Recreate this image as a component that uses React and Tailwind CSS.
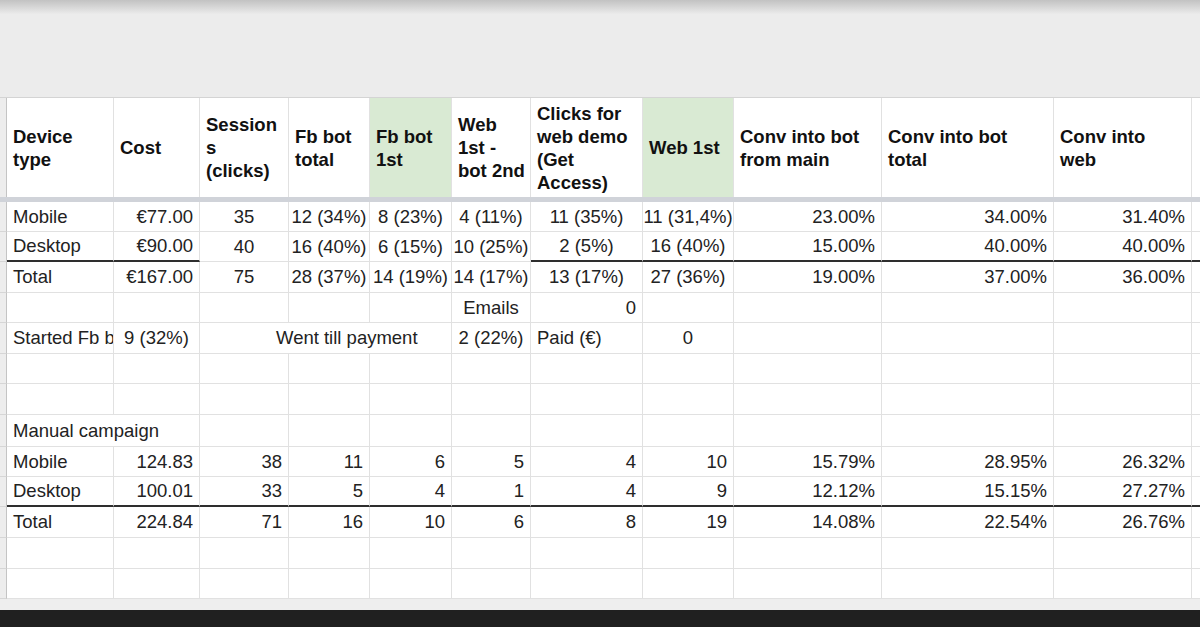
import React from 'react';

const GRID =
  'grid grid-cols-[7px_107px_86px_89px_81px_82px_79px_112px_91px_148px_172px_138px_8px]';

const ALIGN = {
  l: 'justify-start pl-[6px]',
  c: 'justify-center',
  r: 'justify-end pr-[6px]',
};

const HEIGHT = { 30: 'h-[30px]', 31: 'h-[31px]', 32: 'h-[32px]' };

const SPAN = { 1: '', 2: 'col-span-2', 3: 'col-span-3' };

const c = (t, a = 'l', extra = {}) => ({ t, a, ...extra });
const e = () => ({ t: '', a: 'l' });

const header = [
  { lines: ['Device', 'type'] },
  { lines: ['Cost'] },
  { lines: ['Session', 's', '(clicks)'] },
  { lines: ['Fb bot', 'total'] },
  { lines: ['Fb bot', '1st'], green: true },
  { lines: ['Web', '1st -', 'bot 2nd'] },
  { lines: ['Clicks for', 'web demo', '(Get', 'Access)'] },
  { lines: ['Web 1st'], green: true },
  { lines: ['Conv into bot', 'from main'] },
  { lines: ['Conv into bot', 'total'] },
  { lines: ['Conv into', 'web'] },
];

// under: column indexes (0 = A) whose bottom edge is the dark total rule
const rows = [
  {
    h: 30,
    cells: [c('Mobile'), c('€77.00', 'r'), c('35', 'c'), c('12 (34%)', 'c'), c('8 (23%)', 'c'), c('4 (11%)', 'c'), c('11 (35%)', 'c'), c('11 (31,4%)', 'c'), c('23.00%', 'r'), c('34.00%', 'r'), c('31.40%', 'r')],
  },
  {
    h: 30,
    under: [0, 1, 6, 7, 8, 9, 10, 11],
    cells: [c('Desktop'), c('€90.00', 'r'), c('40', 'c'), c('16 (40%)', 'c'), c('6 (15%)', 'c'), c('10 (25%)', 'c'), c('2 (5%)', 'c'), c('16 (40%)', 'c'), c('15.00%', 'r'), c('40.00%', 'r'), c('40.00%', 'r')],
  },
  {
    h: 31,
    cells: [c('Total'), c('€167.00', 'r'), c('75', 'c'), c('28 (37%)', 'c'), c('14 (19%)', 'c'), c('14 (17%)', 'c'), c('13 (17%)', 'c'), c('27 (36%)', 'c'), c('19.00%', 'r'), c('37.00%', 'r'), c('36.00%', 'r')],
  },
  {
    h: 30,
    cells: [e(), e(), e(), e(), e(), c('Emails', 'c'), c('0', 'r'), e(), e(), e(), e()],
  },
  {
    h: 31,
    cells: [c('Started Fb bot'), c('9 (32%)', 'c'), c('Went till payment', 'p', { span: 3 }), c('2 (22%)', 'c'), c('Paid (€)'), c('0', 'c'), e(), e(), e()],
  },
  { h: 30, cells: Array.from({ length: 11 }, e) },
  { h: 31, cells: Array.from({ length: 11 }, e) },
  {
    h: 32,
    cells: [c('Manual campaign', 'l', { span: 2 }), e(), e(), e(), e(), e(), e(), e(), e(), e()],
  },
  {
    h: 30,
    cells: [c('Mobile'), c('124.83', 'r'), c('38', 'r'), c('11', 'r'), c('6', 'r'), c('5', 'r'), c('4', 'r'), c('10', 'r'), c('15.79%', 'r'), c('28.95%', 'r'), c('26.32%', 'r')],
  },
  {
    h: 30,
    under: [0, 1, 2, 3, 4, 5, 6, 7, 8, 9, 10, 11],
    cells: [c('Desktop'), c('100.01', 'r'), c('33', 'r'), c('5', 'r'), c('4', 'r'), c('1', 'r'), c('4', 'r'), c('9', 'r'), c('12.12%', 'r'), c('15.15%', 'r'), c('27.27%', 'r')],
  },
  {
    h: 31,
    cells: [c('Total'), c('224.84', 'r'), c('71', 'r'), c('16', 'r'), c('10', 'r'), c('6', 'r'), c('8', 'r'), c('19', 'r'), c('14.08%', 'r'), c('22.54%', 'r'), c('26.76%', 'r')],
  },
  { h: 31, cells: Array.from({ length: 11 }, e) },
  { h: 30, cells: Array.from({ length: 11 }, e) },
];

function Row({ row }) {
  const under = row.under || [];
  const bottom = (i) =>
    under.includes(i) ? 'border-b-2 border-b-[#2e2e2e]' : 'border-b border-b-[#e1e1e1]';
  let col = 0;
  return (
    <div className={`${GRID} ${HEIGHT[row.h]}`}>
      <div className="border-r border-r-[#c4c4c4] border-b border-b-[#d6d6d6] bg-[#ededed]" />
      {row.cells.map((cell, idx) => {
        const start = col;
        col += cell.span || 1;
        const align = cell.a === 'p' ? 'justify-start pl-[76px]' : ALIGN[cell.a];
        return (
          <div
            key={idx}
            className={`${SPAN[cell.span || 1]} flex items-center whitespace-nowrap overflow-hidden border-r border-r-[#e1e1e1] ${bottom(start)} ${align} bg-white`}
          >
            {cell.t}
          </div>
        );
      })}
      <div className={`bg-white ${bottom(11)}`} />
    </div>
  );
}

export default function App() {
  return (
    <div
      className="w-[1200px] h-[627px] overflow-hidden bg-[#ececec] text-[18.5px] text-[#222]"
      style={{ fontFamily: '"Liberation Sans", Arial, sans-serif' }}
    >
      <div className="h-[14px] bg-gradient-to-b from-[#c2c2c2] to-[#ebebeb]" />
      <div className="h-[83px] bg-[#ececec]" />

      <div className={`${GRID} h-[100px] border-t border-t-[#d4d4d4]`}>
        <div className="border-r border-r-[#c4c4c4] bg-[#ededed]" />
        {header.map((h, i) => (
          <div
            key={i}
            className={`flex flex-col justify-center pl-[6px] font-bold leading-[23px] text-[#111] border-r border-r-[#e1e1e1] ${h.green ? 'bg-[#d9ead3]' : 'bg-white'}`}
          >
            {h.lines.map((l) => (
              <span key={l} className="whitespace-nowrap">
                {l}
              </span>
            ))}
          </div>
        ))}
        <div className="bg-white" />
      </div>

      <div className="h-[5px] bg-[#d0d3d9]" />

      {rows.map((row, i) => (
        <Row key={i} row={row} />
      ))}

      <div className="h-[11px] bg-[#eeeeee]" />
      <div className="h-[17px] bg-[#202020]" />
    </div>
  );
}
